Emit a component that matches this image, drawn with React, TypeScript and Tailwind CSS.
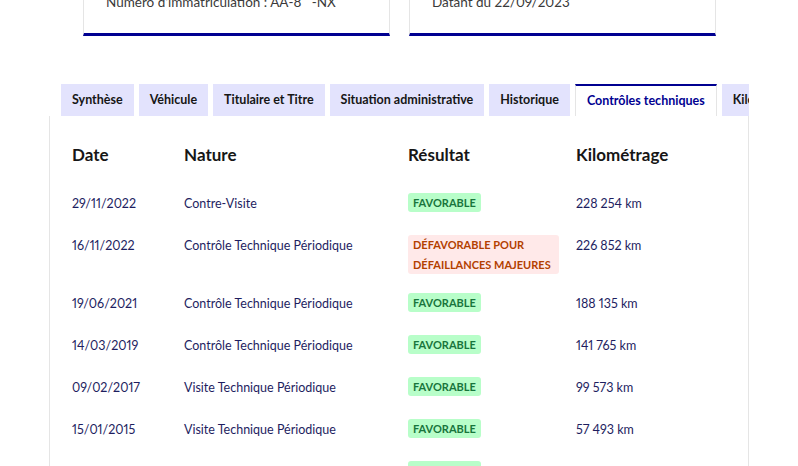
const tabs = [
  "Synthèse",
  "Véhicule",
  "Titulaire et Titre",
  "Situation administrative",
  "Historique",
  "Contrôles techniques",
  "Kilométrage",
];

type Row = {
  date: string;
  nature: string;
  ok: boolean;
  km: string;
};

const rows: Row[] = [
  { date: "29/11/2022", nature: "Contre-Visite", ok: true, km: "228\u202F254 km" },
  { date: "16/11/2022", nature: "Contrôle Technique Périodique", ok: false, km: "226\u202F852 km" },
  { date: "19/06/2021", nature: "Contrôle Technique Périodique", ok: true, km: "188\u202F135 km" },
  { date: "14/03/2019", nature: "Contrôle Technique Périodique", ok: true, km: "141\u202F765 km" },
  { date: "09/02/2017", nature: "Visite Technique Périodique", ok: true, km: "99\u202F573 km" },
  { date: "15/01/2015", nature: "Visite Technique Périodique", ok: true, km: "57\u202F493 km" },
  { date: "18/03/2013", nature: "Visite Technique Périodique", ok: true, km: "33\u202F890 km" },
];

function Card({ children }: { children: React.ReactNode }) {
  return (
    <div className="w-[307px] border-x border-[#e5e5e5] border-b-[3px] border-b-[#000091] bg-white px-[22px] pb-[19px] text-[13.5px] leading-6 text-[#3a3a3a]">
      {children}
    </div>
  );
}

function Badge({ ok }: { ok: boolean }) {
  if (ok) {
    return (
      <span className="block rounded-[3px] bg-[#b8fec9] px-[5px] text-[11px] font-bold leading-[19px] text-[#18753c]">
        FAVORABLE
      </span>
    );
  }
  return (
    <span className="block whitespace-nowrap rounded-[3px] bg-[#ffe9e9] pl-[5px] pr-[8px] text-[11px] font-bold leading-[19.5px] text-[#b34000]">
      DÉFAVORABLE POUR
      <br />
      DÉFAILLANCES MAJEURES
    </span>
  );
}

export default function App() {
  return (
    <div
      className="h-[466px] w-[798px] overflow-hidden bg-white proportional-nums"
      style={{ fontFamily: 'Lato, "Noto Sans", sans-serif' }}
    >
      <div className="-mt-[10px] flex gap-[19px] pl-[83px]">
        <Card>Numéro d'immatriculation : AA-8{"\u00A0\u00A0 "}-NX</Card>
        <Card>Datant du 22/09/2023</Card>
      </div>

      <div className="ml-[49px] mt-[48px] w-[700px]">
        <div className="flex h-8 gap-[5px] overflow-hidden pl-3">
          {tabs.map((t, i) =>
            i === 5 ? (
              <div
                key={t}
                className="flex shrink-0 items-center border-x border-t-2 border-[#e5e5e5] border-t-[#000091] bg-white px-[11px] text-[12.5px] font-bold text-[#000091]"
              >
                {t}
              </div>
            ) : (
              <div
                key={t}
                className="flex shrink-0 items-center bg-[#e3e3fd] px-[11px] text-[12.5px] font-bold text-[#161616]"
              >
                {t}
              </div>
            )
          )}
        </div>
        <div className="h-[400px] border-x border-[#e5e5e5] px-[22px] pt-[25px]">
          <div className="grid grid-cols-[112px_224px_168px_1fr] text-[17px] font-bold leading-7 text-[#161616]">
            <div>Date</div>
            <div>Nature</div>
            <div>Résultat</div>
            <div>Kilométrage</div>
          </div>
          <div className="mt-[14px] flex flex-col">
            {rows.map((r) => (
              <div
                key={r.date}
                className="grid grid-cols-[112px_224px_168px_1fr] items-start py-[9px] text-[12.5px] leading-6 text-[#1e1e5f]"
              >
                <div>{r.date}</div>
                <div>{r.nature}</div>
                <div className="flex items-start pt-[1px]">
                  <Badge ok={r.ok} />
                </div>
                <div>{r.km}</div>
              </div>
            ))}
          </div>
        </div>
      </div>
    </div>
  );
}
